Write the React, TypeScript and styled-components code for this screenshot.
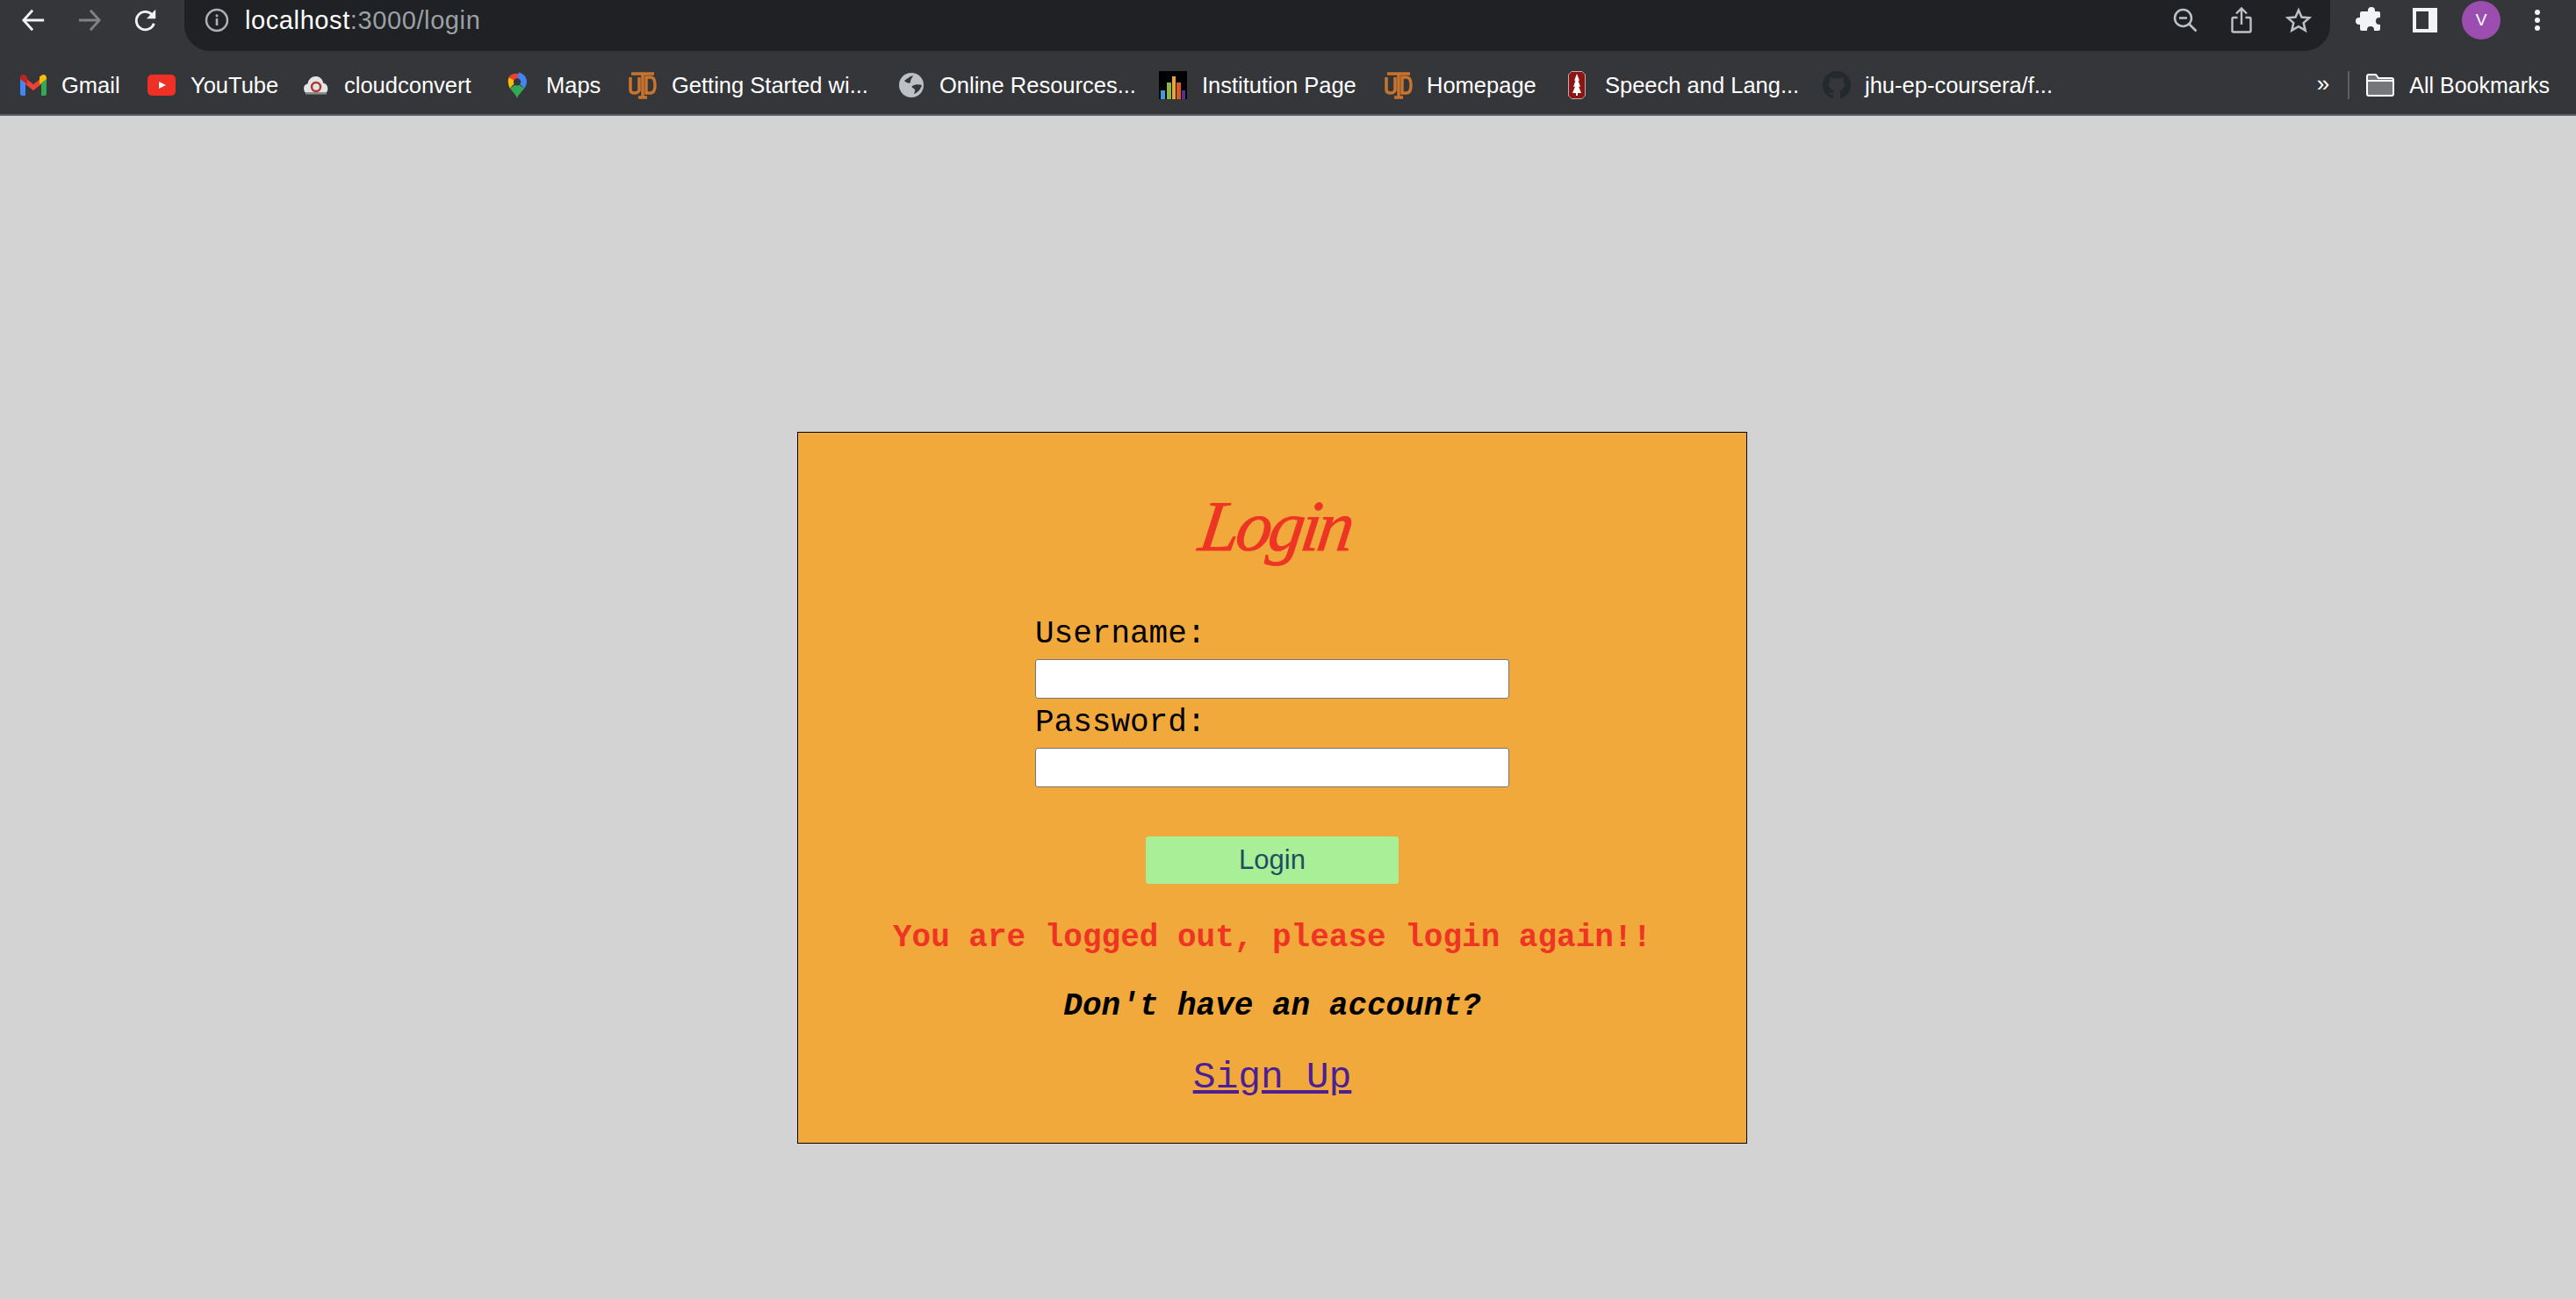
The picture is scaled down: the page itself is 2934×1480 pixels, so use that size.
import React from 'react';
import styled, { createGlobalStyle } from 'styled-components';

const GlobalStyle = createGlobalStyle`
    html, body {
        margin: 0;
        padding: 0;
        background-color: #d3d3d3;
    }
`;

const Page = styled.div`
    width: 2934px;
    height: 1480px;
    overflow: hidden;
    display: flex;
    flex-direction: column;
    font-family: 'Liberation Sans', Arial, sans-serif;
`;

const Toolbar = styled.div`
    height: 60px;
    background-color: #35363a;
    display: flex;
    align-items: flex-start;
    color: #fff;
`;

const NavButtons = styled.div`
    width: 210px;
    height: 46px;
    padding-left: 24px;
    box-sizing: border-box;
    display: flex;
    align-items: center;
    gap: 36px;
`;

const Omnibox = styled.div`
    width: 2444px;
    height: 58px;
    background-color: #202124;
    border-radius: 0 0 29px 29px;
    display: flex;
    align-items: center;
    box-sizing: border-box;
    padding: 0 21px 12px 23px;
`;

const Url = styled.div`
    margin-left: 18px;
    font-size: 29px;
    flex: 1;
    color: #fff;
    letter-spacing: 0.6px;
`;

const UrlRest = styled.span`
    color: #9aa0a6;
`;

const OmniIcons = styled.div`
    display: flex;
    align-items: center;
    gap: 38px;
`;

const ExtIcons = styled.div`
    flex: 1;
    height: 46px;
    display: flex;
    align-items: center;
    padding-left: 29px;
`;

const Avatar = styled.div`
    width: 44px;
    height: 44px;
    margin-left: 28px;
    border-radius: 50%;
    background-color: #9c4db0;
    color: #fff;
    font-size: 19px;
    display: flex;
    align-items: center;
    justify-content: center;
`;

const Menu = styled.div`
    margin-left: 39px;
    display: flex;
`;

const BookmarkBar = styled.div`
    height: 72px;
    box-sizing: border-box;
    background-color: #35363a;
    border-bottom: 2px solid #5f6063;
    display: flex;
    align-items: center;
    padding: 4px 30px 0 23px;
    color: #fff;
    font-size: 25.5px;
`;

const Bookmark = styled.div<{ $width: number; $gap?: number }>`
    width: ${(p) => p.$width}px;
    display: flex;
    align-items: center;
    gap: ${(p) => p.$gap ?? 17}px;
    white-space: nowrap;
`;

const BookmarkSpacer = styled.div`
    flex: 1;
`;

const Chevrons = styled.div`
    font-size: 26px;
    margin-right: 21px;
    padding-bottom: 4px;
`;

const Separator = styled.div`
    width: 2px;
    height: 32px;
    background-color: #5f6063;
    margin-right: 19px;
`;

const AllBookmarks = styled.div`
    display: flex;
    align-items: center;
    gap: 17px;
    font-size: 25px;
`;

const Main = styled.main`
    flex: 1;
    padding: 360px 0 0 908px;
`;

const Card = styled.div`
    width: 1082px;
    height: 811px;
    box-sizing: border-box;
    border: 1px solid #000;
    background-color: #f2a93b;
    display: flex;
    flex-direction: column;
    align-items: center;
    font-family: 'Liberation Mono', 'Courier New', monospace;
    font-size: 36px;
    line-height: 56px;
    color: #000;
`;

const Title = styled.h1`
    height: 202px;
    margin: 0 0 0 10px;
    padding-top: 62px;
    box-sizing: border-box;
    font-family: 'Liberation Serif', serif;
    font-style: italic;
    font-weight: 400;
    font-size: 82px;
    line-height: 90px;
    letter-spacing: -4px;
    color: #ee3524;
    transform: skewX(-8deg);
    -webkit-text-stroke: 0.8px #ee3524;
`;

const Form = styled.form`
    width: 540px;
    display: flex;
    flex-direction: column;
`;

const Label = styled.label`
    display: block;
`;

const Input = styled.input`
    width: 100%;
    height: 45px;
    box-sizing: border-box;
    border: 1px solid #767676;
    border-radius: 3px;
    background-color: #fff;
    padding: 0;
`;

const SubmitButton = styled.button`
    align-self: center;
    width: 288px;
    height: 54px;
    margin-top: 56px;
    border: none;
    border-radius: 3px;
    background-color: #a8ef98;
    color: #1f4f5f;
    font-family: 'Liberation Sans', Arial, sans-serif;
    font-size: 31px;
`;

const ErrorText = styled.p`
    margin: 34px 0 0;
    font-weight: 700;
    color: #ee3524;
`;

const AccountText = styled.p`
    margin: 22px 0 0;
    font-weight: 700;
    font-style: italic;
`;

const SignUp = styled.a`
    margin-top: 23px;
    font-size: 43px;
    line-height: 60px;
    color: #4d1f96;
    text-decoration: underline;
`;

const NavIcon = ({ d, color, size = 30 }: { d: string; color: string; size?: number }) => (
    <svg width={size} height={size} viewBox="0 0 30 30" fill="none" stroke={color} strokeWidth="3">
        <path d={d} />
    </svg>
);

const ReloadIcon = () => (
    <svg width="28" height="28" viewBox="0 0 30 30" fill="none">
        <path d="M25 19a11 11 0 1 1-2.500-11" stroke="#f1f3f4" strokeWidth="3" />
        <path d="M27 2v11H16z" fill="#f1f3f4" />
    </svg>
);

const InfoIcon = () => (
    <svg width="28" height="28" viewBox="0 0 28 28" fill="none">
        <circle cx="14" cy="14" r="12" stroke="#aeb1b5" strokeWidth="2.5" />
        <rect x="12.7" y="12" width="2.6" height="8" fill="#aeb1b5" />
        <rect x="12.7" y="7.5" width="2.6" height="2.8" fill="#aeb1b5" />
    </svg>
);

const ZoomOutIcon = () => (
    <svg width="28" height="28" viewBox="0 0 28 28" fill="none" stroke="#bdc1c6" strokeWidth="2.5">
        <circle cx="11.5" cy="11.5" r="9.5" />
        <path d="M7 11.5h9M18.5 18.5l8 8" />
    </svg>
);

const ShareIcon = () => (
    <svg width="24" height="30" viewBox="0 0 24 30" fill="none" stroke="#bdc1c6" strokeWidth="2.4">
        <path d="M7.5 12H3a1.5 1.5 0 0 0-1.500 1.500V27a1.500 1.500 0 0 0 1.500 1.500h18a1.500 1.500 0 0 0 1.500-1.500V13.500A1.500 1.500 0 0 0 21 12h-4.500" />
        <path d="M12 20V2M6 7.500 12 1.500l6 6" />
    </svg>
);

const StarIcon = () => (
    <svg width="30" height="30" viewBox="0 0 30 30" fill="none" stroke="#bdc1c6" strokeWidth="2.500">
        <path d="M15 3.500l3.500 8 8.800.8-6.600 5.800 2 8.500L15 22.100l-7.700 4.500 2-8.500-6.600-5.800 8.800-.8z" />
    </svg>
);

const PuzzleIcon = () => (
    <svg width="30" height="30" viewBox="0 0 30 30">
        <path
            fill="#f1f3f4"
            d="M10 5h4V4a4 4 0 0 1 8 0v1h4a2 2 0 0 1 2 2v5h-1a4 4 0 0 0 0 8h1v5a2 2 0 0 1-2 2h-5v-1a4 4 0 0 0-8 0v1H7a2 2 0 0 1-2-2v-5H4a4 4 0 0 1 0-8h1V7a2 2 0 0 1 2-2z"
        />
    </svg>
);

const PanelSvg = styled.svg`
    margin-left: 35px;
`;

const PanelIcon = () => (
    <PanelSvg width="28" height="28" viewBox="0 0 28 28">
        <path fill="#f1f3f4" fillRule="evenodd" d="M0 0h28v28H0zM4 4v20h14V4z" />
    </PanelSvg>
);

const DotsIcon = () => (
    <svg width="6" height="24" viewBox="0 0 6 24" fill="#f1f3f4">
        <circle cx="3" cy="3" r="3" />
        <circle cx="3" cy="12" r="3" />
        <circle cx="3" cy="21" r="3" />
    </svg>
);

const GmailIcon = () => (
    <svg width="30" height="24" viewBox="0 0 30 24">
        <path fill="#4285f4" d="M0 3h6v21H2a2 2 0 0 1-2-2z" />
        <path fill="#34a853" d="M24 3h6v19a2 2 0 0 1-2 2h-4z" />
        <path fill="#ea4335" d="M6 4l9 7 9-7v7l-9 7-9-7z" />
        <path fill="#c5221f" d="M0 4c0-3.500 3.500-5 6-3l2 1.500V11L0 5z" />
        <path fill="#fbbc04" d="M30 4c0-3.500-3.500-5-6-3l-2 1.500V11l8-6z" />
    </svg>
);

const YouTubeIcon = () => (
    <svg width="32" height="24" viewBox="0 0 32 24">
        <rect width="32" height="24" rx="5" fill="#ee3124" />
        <path d="M13 8l8 4-8 4z" fill="#fff" />
    </svg>
);

const CloudIcon = () => (
    <svg width="30" height="22" viewBox="0 0 30 22">
        <path fill="#e4e4e4" d="M7 21a6 6 0 0 1-1.500-11.800A9 9 0 0 1 15 1a8 8 0 0 1 8 7.500A6.500 6.500 0 0 1 24 21z" />
        <circle cx="15" cy="13" r="5" fill="none" stroke="#a83c32" strokeWidth="2.500" />
        <rect x="3" y="19" width="24" height="2.500" fill="#8d8d8d" />
    </svg>
);

const MapsIcon = () => (
    <svg width="22" height="32" viewBox="0 0 24 32">
        <path fill="#34a853" d="M3 20c3 4 7 7 9 12 2-5 6-8 9-12l-9-6z" />
        <path fill="#fbbc04" d="M1.500 6.500C0 11 1 16 3 20l9-10z" />
        <path fill="#ea4335" d="M1.500 6.500 12 12l2-10C9 .5 4 2 1.500 6.500z" />
        <path fill="#4285f4" d="M14 .3C19 1 24 6 24 12c0 3-1.500 6-3 8l-9-8z" />
        <circle cx="12" cy="12" r="4.500" fill="#35363a" />
    </svg>
);

const UtdIcon = () => (
    <svg width="32" height="32" viewBox="0 0 32 32" fill="none" stroke="#c8742c" strokeWidth="3.5">
        <path d="M2 7v14c0 3 2 4 5 4s4-1 5-3V7" />
        <path d="M20 7h5c4 0 5 4 5 9s-1 9-5 9h-5z" />
        <path d="M3 3h26M16 3v27M11 30h10" />
    </svg>
);

const GlobeIcon = () => (
    <svg width="28" height="28" viewBox="0 0 28 28">
        <circle cx="14" cy="14" r="14" fill="#bdc1c6" />
        <path fill="#35363a" d="M6 9c3-2 6-5 10-6-1 3-3 4-3 7s-4 2-7-1zM15 15c3-2 8-2 11-1-1 4-5 9-9 10 1-3 2-5 0-6s-3-2-2-3z" />
    </svg>
);

const ChartIcon = () => (
    <svg width="32" height="32" viewBox="0 0 32 32">
        <rect width="32" height="32" fill="#000" />
        <rect x="2" y="22" width="5" height="10" fill="#3f9bd9" />
        <rect x="9" y="13" width="5" height="19" fill="#8bb63f" />
        <rect x="15" y="6" width="4" height="26" fill="#e9a928" />
        <rect x="20" y="13" width="5" height="19" fill="#d9572b" />
        <rect x="26" y="22" width="4" height="10" fill="#5a2d91" />
    </svg>
);

const StanfordIcon = () => (
    <svg width="20" height="32" viewBox="0 0 20 32">
        <path fill="#8c1515" stroke="#c9a9a9" d="M4 .5h12l3.500 3.500v24L16 31.500H4L.5 28V4z" />
        <path fill="#fff" d="M10 3l3 8-1.500-.5L14 18l-2-.5L15 25h-4v3H9v-3H5l3-7.500-2 .5 2.500-7.500L7 11z" />
    </svg>
);

const GithubIcon = () => (
    <svg width="32" height="32" viewBox="0 0 32 32">
        <circle cx="16" cy="16" r="16" fill="#24292e" />
        <path fill="#35363a" d="M12 32v-5c-4 1-5-1-6-3 2 0 3 2 6 1 0-1 0-2 1-3-4-.5-6-3-6-7 0-2 .5-3 1.500-4-.5-1.500 0-3 .5-4 1.500 0 3 1 4 1.500 2-.5 4-.5 6 0 1-.5 2.500-1.500 4-1.500.5 1 1 2.500.5 4 1 1 1.500 2 1.500 4 0 4-2 6.500-6 7 1 1 1 2 1 3v7z" />
    </svg>
);

const FolderIcon = () => (
    <svg width="32" height="26" viewBox="0 0 32 26">
        <path fill="#75777a" stroke="#fff" strokeWidth="2" d="M1 3a2 2 0 0 1 2-2h8l3 4h15a2 2 0 0 1 2 2v16a2 2 0 0 1-2 2H3a2 2 0 0 1-2-2z" />
        <path fill="none" stroke="#fff" strokeWidth="2" d="M1 8h30" />
    </svg>
);

const bookmarks = [
    { icon: <GmailIcon />, label: 'Gmail', width: 145 },
    { icon: <YouTubeIcon />, label: 'YouTube', width: 177 },
    { icon: <CloudIcon />, label: 'cloudconvert', width: 233 },
    { icon: <MapsIcon />, label: 'Maps', width: 138, gap: 22 },
    { icon: <UtdIcon />, label: 'Getting Started wi...', width: 308 },
    { icon: <GlobeIcon />, label: 'Online Resources...', width: 296, gap: 18 },
    { icon: <ChartIcon />, label: 'Institution Page', width: 257 },
    { icon: <UtdIcon />, label: 'Homepage', width: 209, gap: 16 },
    { icon: <StanfordIcon />, label: 'Speech and Lang...', width: 290, gap: 22 },
    { icon: <GithubIcon />, label: 'jhu-ep-coursera/f...', width: 270, gap: 16 },
];

const App: React.FC = () => {
    return (
        <Page>
            <GlobalStyle />
            <Toolbar>
                <NavButtons>
                    <NavIcon color="#f1f3f4" size={28} d="M28 15H3M14 3 3 15l11 12" />
                    <NavIcon color="#808285" size={28} d="M2 15h25M16 3l11 12-11 12" />
                    <ReloadIcon />
                </NavButtons>
                <Omnibox>
                    <InfoIcon />
                    <Url>
                        localhost<UrlRest>:3000/login</UrlRest>
                    </Url>
                    <OmniIcons>
                        <ZoomOutIcon />
                        <ShareIcon />
                        <StarIcon />
                    </OmniIcons>
                </Omnibox>
                <ExtIcons>
                    <PuzzleIcon />
                    <PanelIcon />
                    <Avatar>V</Avatar>
                    <Menu>
                        <DotsIcon />
                    </Menu>
                </ExtIcons>
            </Toolbar>
            <BookmarkBar>
                {bookmarks.map((b) => (
                    <Bookmark key={b.label} $width={b.width} $gap={b.gap}>
                        {b.icon}
                        <span>{b.label}</span>
                    </Bookmark>
                ))}
                <BookmarkSpacer />
                <Chevrons>»</Chevrons>
                <Separator />
                <AllBookmarks>
                    <FolderIcon />
                    All Bookmarks
                </AllBookmarks>
            </BookmarkBar>
            <Main>
                <Card>
                    <Title>Login</Title>
                    <Form onSubmit={(e) => e.preventDefault()}>
                        <Label htmlFor="username">Username:</Label>
                        <Input id="username" type="text" />
                        <Label htmlFor="password">Password:</Label>
                        <Input id="password" type="password" />
                        <SubmitButton type="submit">Login</SubmitButton>
                    </Form>
                    <ErrorText>You are logged out, please login again!!</ErrorText>
                    <AccountText>Don't have an account?</AccountText>
                    <SignUp href="#signup">Sign Up</SignUp>
                </Card>
            </Main>
        </Page>
    );
};

export default App;
